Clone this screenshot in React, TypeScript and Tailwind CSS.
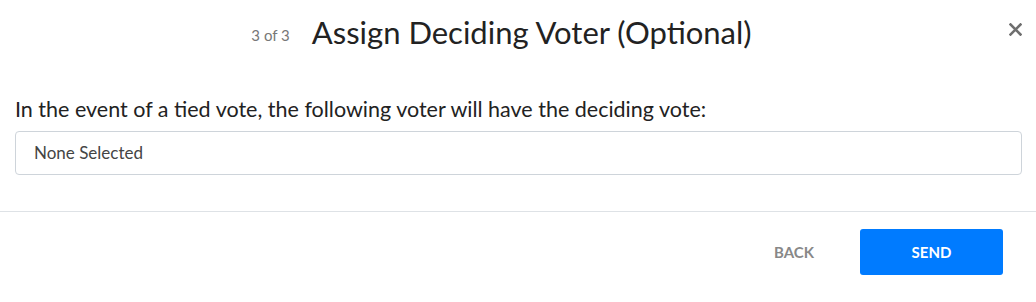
export default function App() {
  return (
    <div className="h-[302px] w-full bg-white font-['Lato','Noto_Sans',sans-serif] text-[#222]">
      <div className="relative flex h-[68px] items-center justify-center pb-[3px] pr-[33px]">
        <span className="mr-[22px] mt-[6px] text-[15px] text-[#777]">3 of 3</span>
        <h2 className="text-[31px] leading-none text-[#222]">Assign Deciding Voter (Optional)</h2>
        <button
          type="button"
          className="absolute right-[14px] top-[22px] flex h-[14px] w-[14px] items-center justify-center text-[#6f6f6f]"
          aria-label="Close"
        >
          <svg width="13" height="13" viewBox="0 0 13 13" fill="none" stroke="currentColor" strokeWidth="2.6" strokeLinecap="square">
            <path d="M1.5 1.5 L11.5 11.5 M11.5 1.5 L1.5 11.5" />
          </svg>
        </button>
      </div>

      <div className="px-[15px] pt-[28px]">
        <p className="text-[21.5px] leading-[26px] text-[#222]">
          In the event of a tied vote, the following voter will have the deciding vote:
        </p>
        <div className="mt-[9px] mr-[-1px] flex h-[44px] items-center rounded-[4px] border border-[#ced4da] px-[18px] text-[17px] text-[#444]">
          None Selected
        </div>
      </div>

      <div className="mt-[36px] flex items-center justify-end gap-[46px] border-t border-[#dee2e6] pr-[33px] pt-[17px]">
        <button type="button" className="text-[15px] font-bold text-[#888]">
          BACK
        </button>
        <button
          type="button"
          className="h-[46px] w-[143px] rounded-[3px] bg-[#007bff] text-[15px] font-bold text-white"
        >
          SEND
        </button>
      </div>
    </div>
  );
}
